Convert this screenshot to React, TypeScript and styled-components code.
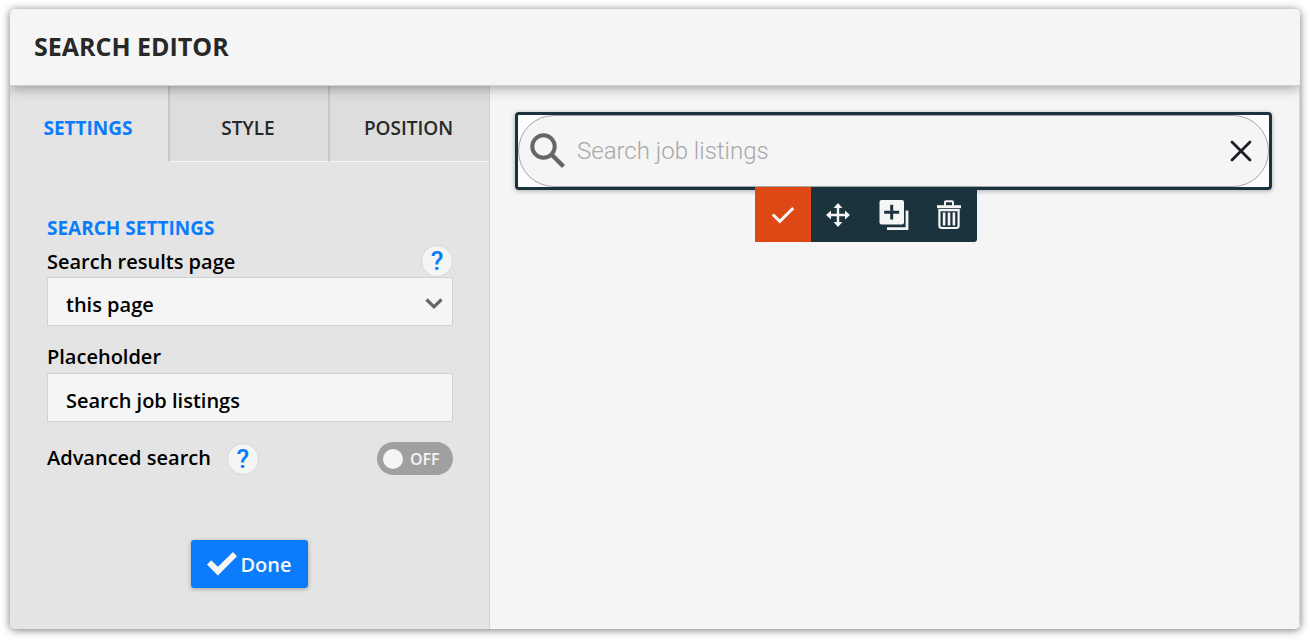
import React, { useState } from "react";
import styled, { createGlobalStyle } from "styled-components";

const color = {
  surface: "#f5f5f5",
  side: "#e4e4e4",
  tab: "#dddddd",
  line: "#d3d3d3",
  blue: "#0a7cfb",
  ink: "#282828",
  teal: "#1b333d",
  orange: "#de4814",
  icon: "#666666",
};

const GlobalStyle = createGlobalStyle`
  *, *::before, *::after { box-sizing: border-box; }
  body {
    margin: 0;
    padding: 9px 10px 11px;
    background: #ffffff;
    font-family: "Open Sans", sans-serif;
    color: #000000;
  }
  button, input, select { font: inherit; color: inherit; margin: 0; }
  svg { display: block; flex: none; }
`;

const Window = styled.div`
  display: flex;
  flex-direction: column;
  min-height: calc(100vh - 20px);
  border-radius: 5px;
  background: ${color.surface};
  box-shadow: 0 1px 9px rgba(0, 0, 0, 0.55);
  overflow: hidden;
`;

const Header = styled.header`
  position: relative;
  z-index: 1;
  display: flex;
  align-items: center;
  height: 77px;
  padding: 0 24px 2px;
  background: ${color.surface};
  border-bottom: 1px solid #d0d0d0;
  box-shadow: 0 1px 13px rgba(0, 0, 0, 0.4);
`;

const Title = styled.h1`
  margin: 0;
  font-size: 25px;
  line-height: 36px;
  font-weight: 700;
  color: ${color.ink};
`;

const Body = styled.div`
  display: flex;
  flex: 1;
`;

const Sidebar = styled.aside`
  flex: none;
  width: 480px;
  background: ${color.side};
  border-right: 1px solid ${color.line};
`;

const Tabs = styled.div`
  display: grid;
  grid-template-columns: 158px 160px 1fr;
  height: 76px;
`;

const Tab = styled.button<{ $active?: boolean }>`
  padding: 8px 2px 0 0;
  border: 0;
  border-left: ${(p) => (p.$active ? "0" : "2px solid #c6c6c6")};
  border-bottom: 1px solid ${(p) => (p.$active ? color.side : "#f6f6f6")};
  background: ${(p) => (p.$active ? color.side : color.tab)};
  color: ${(p) => (p.$active ? color.blue : color.ink)};
  font-size: 19px;
  font-weight: ${(p) => (p.$active ? 700 : 600)};
  cursor: pointer;
`;

const Form = styled.form`
  display: flex;
  flex-direction: column;
  padding: 54px 36px 40px 37px;
  font-size: 20px;
  font-weight: 600;
`;

const SectionTitle = styled.h2`
  margin: 0;
  font-size: 19px;
  line-height: 24px;
  font-weight: 700;
  color: ${color.blue};
`;

const LabelRow = styled.div`
  display: flex;
  align-items: center;
  justify-content: space-between;
  margin-top: 5px;
`;

const Label = styled.label`
  padding-top: 2px;
  line-height: 28px;
`;

const SwitchLabel = styled.label`
  padding-bottom: 2px;
  line-height: 28px;
`;

const Help = styled.button`
  width: 32px;
  height: 32px;
  padding: 0;
  border: 1px solid #d8d8d8;
  border-radius: 50%;
  background: ${color.surface};
  color: ${color.blue};
  font-family: Roboto, sans-serif;
  font-size: 26px;
  line-height: 30px;
  font-weight: 500;
  text-align: center;
  cursor: pointer;
`;

const SelectWrap = styled.div`
  display: grid;
  align-items: center;
  margin-bottom: 15px;

  & > * { grid-area: 1 / 1; }
  & > svg { justify-self: end; margin: 4px 10px 0 0; pointer-events: none; }
`;

const fieldBox = `
  width: 100%;
  height: 49px;
  padding: 6px 18px 0;
  border: 1px solid #d2d2d2;
  border-radius: 0;
  outline: 0;
  background: ${color.surface};
`;

const Select = styled.select`
  ${fieldBox}
  appearance: none;
`;

const TextInput = styled.input`
  ${fieldBox}
  margin-top: 2px;
`;

const SwitchRow = styled.div`
  display: flex;
  align-items: center;
  gap: 16px;
  margin-top: 20px;
`;

const Switch = styled.label`
  display: flex;
  align-items: center;
  gap: 7px;
  width: 76px;
  height: 33px;
  margin-left: auto;
  padding-left: 6px;
  border-radius: 17px;
  background: #a0a0a0;
  color: ${color.surface};
  font-size: 16px;
  cursor: pointer;

  &:has(input:checked) { background: ${color.blue}; }
`;

const SwitchInput = styled.input`
  appearance: none;
  flex: none;
  width: 20px;
  height: 20px;
  border-radius: 50%;
  background: ${color.surface};
`;

const Done = styled.button`
  display: flex;
  align-items: center;
  justify-content: center;
  gap: 2px;
  align-self: center;
  width: 117px;
  height: 48px;
  margin: 65px 2px 0 0;
  padding: 0;
  border: 0;
  border-radius: 3px;
  background: ${color.blue};
  color: ${color.surface};
  box-shadow: 0 1px 4px rgba(0, 0, 0, 0.3);
  font-weight: 600;
  cursor: pointer;
`;

const Preview = styled.main`
  flex: 1;
  min-width: 0;
  padding: 26px 27px 40px 25px;
  border-right: 1px solid #d8d8d8;
`;

const Selection = styled.div`
  position: relative;
  border: 3px solid ${color.teal};
  border-radius: 4px;
  background: #fdfdfd;
  box-shadow: 0 1px 5px rgba(0, 0, 0, 0.3);
`;

const SearchBox = styled.div`
  display: flex;
  align-items: center;
  height: 72px;
  padding: 0 16px 0 11px;
  border: 1px solid #a4a4a4;
  border-radius: 36px;
  background: ${color.surface};
`;

const SearchInput = styled.input`
  flex: 1;
  min-width: 0;
  padding: 0 11px;
  border: 0;
  outline: 0;
  background: transparent;
  font-family: Roboto, sans-serif;
  font-size: 24px;
  font-weight: 300;

  &::placeholder { color: #a8a8a8; opacity: 1; }
`;

const IconButton = styled.button`
  display: flex;
  padding: 0;
  border: 0;
  background: transparent;
  cursor: pointer;
`;

const Toolbar = styled.div`
  position: absolute;
  top: 100%;
  left: 237px;
  display: grid;
  grid-template-columns: repeat(4, 1fr);
  width: 222px;
  height: 55px;
  overflow: hidden;
  border-radius: 0 0 3px 0;
  background: ${color.teal};
`;

const Tool = styled.button<{ $primary?: boolean }>`
  display: flex;
  align-items: center;
  justify-content: center;
  padding: 0;
  border: 0;
  background: ${(p) => (p.$primary ? color.orange : "transparent")};
  color: ${color.surface};
  cursor: pointer;
`;

const Chevron = () => (
  <svg width="18" height="12" viewBox="0 0 18 12">
    <path d="M1.5 1.5 9 8.8 16.5 1.5" fill="none" stroke={color.icon} strokeWidth="3.2" />
  </svg>
);

const DoneMark = () => (
  <svg width="32" height="26" viewBox="0 0 32 26">
    <path d="M1 13.5 5.2 9.3 11.9 15.8 27 1 31 5.2 11.9 24.5Z" fill={color.surface} />
  </svg>
);

const Magnifier = () => (
  <svg width="36" height="36" viewBox="0 0 36 36">
    <circle cx="13.5" cy="13.5" r="11.2" fill="none" stroke={color.icon} strokeWidth="4" />
    <path d="M22 22 33.5 33.5" fill="none" stroke={color.icon} strokeWidth="4.4" />
  </svg>
);

const Cross = () => (
  <svg width="22" height="22" viewBox="0 0 22 22">
    <path d="M2 2 20 20M20 2 2 20" fill="none" stroke="#1a1d22" strokeWidth="2.8" strokeLinecap="round" />
  </svg>
);

const ToolCheck = () => (
  <svg width="24" height="18" viewBox="0 0 24 18">
    <path d="M1.8 8.5 8.8 15.3 22.3 2" fill="none" stroke="currentColor" strokeWidth="3" />
  </svg>
);

const ToolMove = () => (
  <svg width="24" height="24" viewBox="0 0 24 24" fill="currentColor">
    <path d="M12 0 16.4 5H13.2V10.8H19V7.6L24 12 19 16.4V13.2H13.2V19H16.4L12 24 7.6 19H10.8V13.2H5V16.4L0 12 5 7.6V10.8H10.8V5H7.6Z" />
  </svg>
);

const ToolCopy = () => (
  <svg width="30" height="30" viewBox="0 0 30 30">
    <rect x="0.5" y="0" width="24.5" height="24.5" rx="2" fill="currentColor" />
    <path d="M12.7 4.8V19.6M5.2 12.2H20.2" stroke={color.teal} strokeWidth="3" />
    <path d="M28 10.5V28.6H8" fill="none" stroke="currentColor" strokeWidth="2.8" />
  </svg>
);

const ToolTrash = () => (
  <svg width="24" height="30" viewBox="0 0 24 30">
    <path d="M8 6V2.2Q8 1.2 9 1.2H15Q16 1.2 16 2.2V6" fill="none" stroke="currentColor" strokeWidth="2" />
    <rect x="0" y="5.2" width="24" height="3" fill="currentColor" />
    <path d="M2.4 10.2V25.6Q2.4 28 4.8 28H19.2Q21.6 28 21.6 25.6V10.2Z" fill="none" stroke="currentColor" strokeWidth="2.2" />
    <path d="M7.1 12.5V25.5M12 12.5V25.5M16.9 12.5V25.5" stroke="currentColor" strokeWidth="2.6" />
  </svg>
);

export default function App() {
  const [placeholder, setPlaceholder] = useState("Search job listings");
  const [advanced, setAdvanced] = useState(false);

  return (
    <>
      <GlobalStyle />
      <Window>
        <Header>
          <Title>SEARCH EDITOR</Title>
        </Header>
        <Body>
          <Sidebar>
            <Tabs role="tablist">
              <Tab role="tab" aria-selected="true" $active>SETTINGS</Tab>
              <Tab role="tab" aria-selected="false">STYLE</Tab>
              <Tab role="tab" aria-selected="false">POSITION</Tab>
            </Tabs>
            <Form onSubmit={(e) => e.preventDefault()}>
              <SectionTitle>SEARCH SETTINGS</SectionTitle>
              <LabelRow>
                <Label htmlFor="results">Search results page</Label>
                <Help type="button">?</Help>
              </LabelRow>
              <SelectWrap>
                <Select id="results" defaultValue="this page">
                  <option>this page</option>
                </Select>
                <Chevron />
              </SelectWrap>
              <Label htmlFor="placeholder">Placeholder</Label>
              <TextInput
                id="placeholder"
                type="text"
                value={placeholder}
                onChange={(e) => setPlaceholder(e.target.value)}
              />
              <SwitchRow>
                <SwitchLabel htmlFor="advanced">Advanced search</SwitchLabel>
                <Help type="button">?</Help>
                <Switch>
                  <SwitchInput
                    id="advanced"
                    type="checkbox"
                    role="switch"
                    checked={advanced}
                    onChange={(e) => setAdvanced(e.target.checked)}
                  />
                  {advanced ? "ON" : "OFF"}
                </Switch>
              </SwitchRow>
              <Done type="submit">
                <DoneMark />
                Done
              </Done>
            </Form>
          </Sidebar>
          <Preview>
            <Selection>
              <SearchBox>
                <Magnifier />
                <SearchInput type="text" aria-label="Search" placeholder={placeholder} />
                <IconButton type="button" aria-label="Clear">
                  <Cross />
                </IconButton>
              </SearchBox>
              <Toolbar>
                <Tool type="button" aria-label="Confirm" $primary><ToolCheck /></Tool>
                <Tool type="button" aria-label="Move"><ToolMove /></Tool>
                <Tool type="button" aria-label="Duplicate"><ToolCopy /></Tool>
                <Tool type="button" aria-label="Delete"><ToolTrash /></Tool>
              </Toolbar>
            </Selection>
          </Preview>
        </Body>
      </Window>
    </>
  );
}
